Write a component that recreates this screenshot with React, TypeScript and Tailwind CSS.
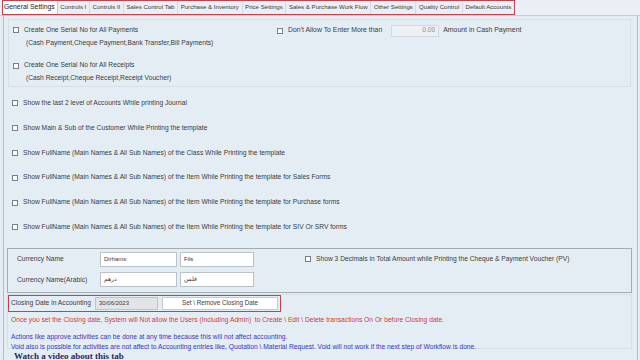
import React from "react";

const tabs = [
  "General Settings",
  "Controls I",
  "Controls II",
  "Sales Control Tab",
  "Purchase & Inventory",
  "Price Settings",
  "Sales & Purchase Work Flow",
  "Other Settings",
  "Quality Control",
  "Default Accounts",
];

function Box() {
  return <span className="inline-block w-[6px] h-[6px] border border-[#7a7f85] bg-white shrink-0" />;
}

function CheckRow({ label }: { label: string }) {
  return (
    <div className="flex items-center h-[24.8px] pl-[8px] gap-[5px]">
      <Box />
      <span>{label}</span>
    </div>
  );
}

export default function App() {
  return (
    <div className="w-[640px] h-[360px] overflow-hidden bg-[#e5edf4] text-[#3a3a3a] text-[6.7px] leading-none font-['Liberation_Sans',Arial,sans-serif] flex flex-col">
      {/* Tab strip */}
      <div className="h-[16px] shrink-0 flex items-start pl-[2px] border-b border-[#c5ced8] bg-[#e9eff5]">
        <div className="flex h-[15px] border border-[#c8404c]">
          {tabs.map((t, i) => (
            <div
              key={t}
              className={
                i === 0
                  ? "h-full flex items-center pl-[1px] pr-[2px] bg-white border-r border-[#c0c8d0] text-[#222] text-[6.8px]"
                  : "h-full flex items-center px-[2.6px] border-r border-[#d4dbe2] last:border-r-0 text-[6.1px]"
              }
            >
              {t}
            </div>
          ))}
        </div>
      </div>

      {/* Body */}
      <div className="flex-1 flex ml-[3px] mr-[2px] border-l border-[#a9b2bb] border-r border-[#b4bcc4]">
        <div className="flex-1 flex flex-col">
          {/* Group 1 */}
          <div className="mt-[3px] ml-[4px] mr-[6px] h-[68px] border border-[#d6dee6] pt-[4px] pl-[4px]">
            <div className="flex h-[13px] items-center">
              <div className="w-[264px] flex items-center gap-[5px]">
                <Box />
                <span>Create One Serial No for All Payments</span>
              </div>
              <div className="flex items-center">
                <Box />
                <span className="ml-[5px] text-[6.9px]">Don't Allow To Enter More than</span>
                <div className="ml-[9px] w-[48px] h-[12px] border border-[#d2d8de] bg-[#edf1f5] flex items-center justify-end pr-[3px] text-[#8a8f94]">
                  0.00
                </div>
                <span className="ml-[4px] text-[6.9px]">Amount in Cash Payment</span>
              </div>
            </div>
            <div className="h-[13px] flex items-center pl-[13px]">
              (Cash Payment,Cheque Payment,Bank Transfer,Bill Payments)
            </div>
            <div className="h-[9px]" />
            <div className="flex h-[13px] items-center gap-[5px]">
              <Box />
              <span>Create One Serial No for All Receipts</span>
            </div>
            <div className="h-[13px] flex items-center pl-[13px]">
              (Cash Receipt,Cheque Receipt,Receipt Voucher)
            </div>
          </div>

          {/* Check rows */}
          <div className="mt-[4px] flex flex-col">
            <CheckRow label="Show the last 2 level of Accounts While printing Journal" />
            <CheckRow label="Show Main & Sub of the Customer While Printing the template" />
            <CheckRow label="Show FullName (Main Names & All Sub Names) of the Class While Printing the template" />
            <CheckRow label="Show FullName (Main Names & All Sub Names) of the Item While Printing the template for Sales Forms" />
            <CheckRow label="Show FullName (Main Names & All Sub Names) of the Item While Printing the template for Purchase forms" />
            <CheckRow label="Show FullName (Main Names & All Sub Names) of the Item While Printing the template for SIV Or SRV forms" />
          </div>

          {/* Currency box */}
          <div className="mt-[8px] ml-[3px] mr-[5px] h-[45px] border border-[#a3abb3] pt-[3px] flex">
            <div className="flex flex-col gap-[5px]">
              <div className="flex items-center h-[15px]">
                <span className="w-[92px] pl-[9px]">Currency Name</span>
                <div className="w-[77px] h-[15px] bg-white border border-[#b9c1c9] flex items-center pl-[3px] text-[6px]">Dirhams</div>
                <div className="ml-[3px] w-[74px] h-[15px] bg-white border border-[#b9c1c9] flex items-center pl-[3px] text-[6px]">Fils</div>
              </div>
              <div className="flex items-center h-[15px]">
                <span className="w-[92px] pl-[9px] pt-[3px]">Currency Name(Arabic)</span>
                <div className="w-[77px] h-[15px] bg-white border border-[#b9c1c9] flex items-center pl-[3px] text-[6px] font-['Noto_Sans',sans-serif]">درهم</div>
                <div className="ml-[3px] w-[74px] h-[15px] bg-white border border-[#b9c1c9] flex items-center pl-[3px] text-[6px] font-['Noto_Sans',sans-serif]">فلس</div>
              </div>
            </div>
            <div className="ml-[51px] h-[15px] flex items-center gap-[5px]">
              <Box />
              <span>Show 3 Decimals in Total Amount while Printing the Cheque &amp; Payment Voucher (PV)</span>
            </div>
          </div>

          {/* Closing box */}
          <div className="mt-[1px] ml-[3px] mr-[5px] h-[55px] border border-[#d6dee6]">
            <div className="ml-[0px] w-[273px] h-[17px] border border-[#c8404c] flex items-center">
              <span className="pl-[2px] w-[86px]">Closing Date in Accounting</span>
              <div className="w-[63px] h-[13px] bg-[#e2e4e6] border border-[#bfc4c9] flex items-center pl-[3px] text-[6px]">30/06/2023</div>
              <div className="ml-[4px] w-[116px] h-[13px] bg-white border border-[#c4c9ce] flex items-center justify-center text-[6.3px]">
                Set \ Remove Closing Date
              </div>
            </div>
            <div className="pl-[3px] mt-[5px] text-[#cc3a3a] whitespace-pre">
              Once you set the Closing date, System will Not allow the Users (Including Admin)  to Create \ Edit \ Delete transactions On Or before Closing date.
            </div>
            <div className="pl-[3px] mt-[9px] text-[#3434c8] leading-[10px]">
              <div>Actions like approve activities can be done at any time because this will not affect accounting.</div>
              <div>Void also is possible for activities are not affect to Accounting entries like, Quotation \ Material Request. Void will not work if the next step of Workflow is done.</div>
            </div>
          </div>
          <div className="pl-[10px] mt-[2px] text-[9px] leading-[10px] text-[#1e2a5a] font-['Liberation_Serif',serif] font-bold">
            Watch a video about this tab
          </div>
        </div>
      </div>
    </div>
  );
}
